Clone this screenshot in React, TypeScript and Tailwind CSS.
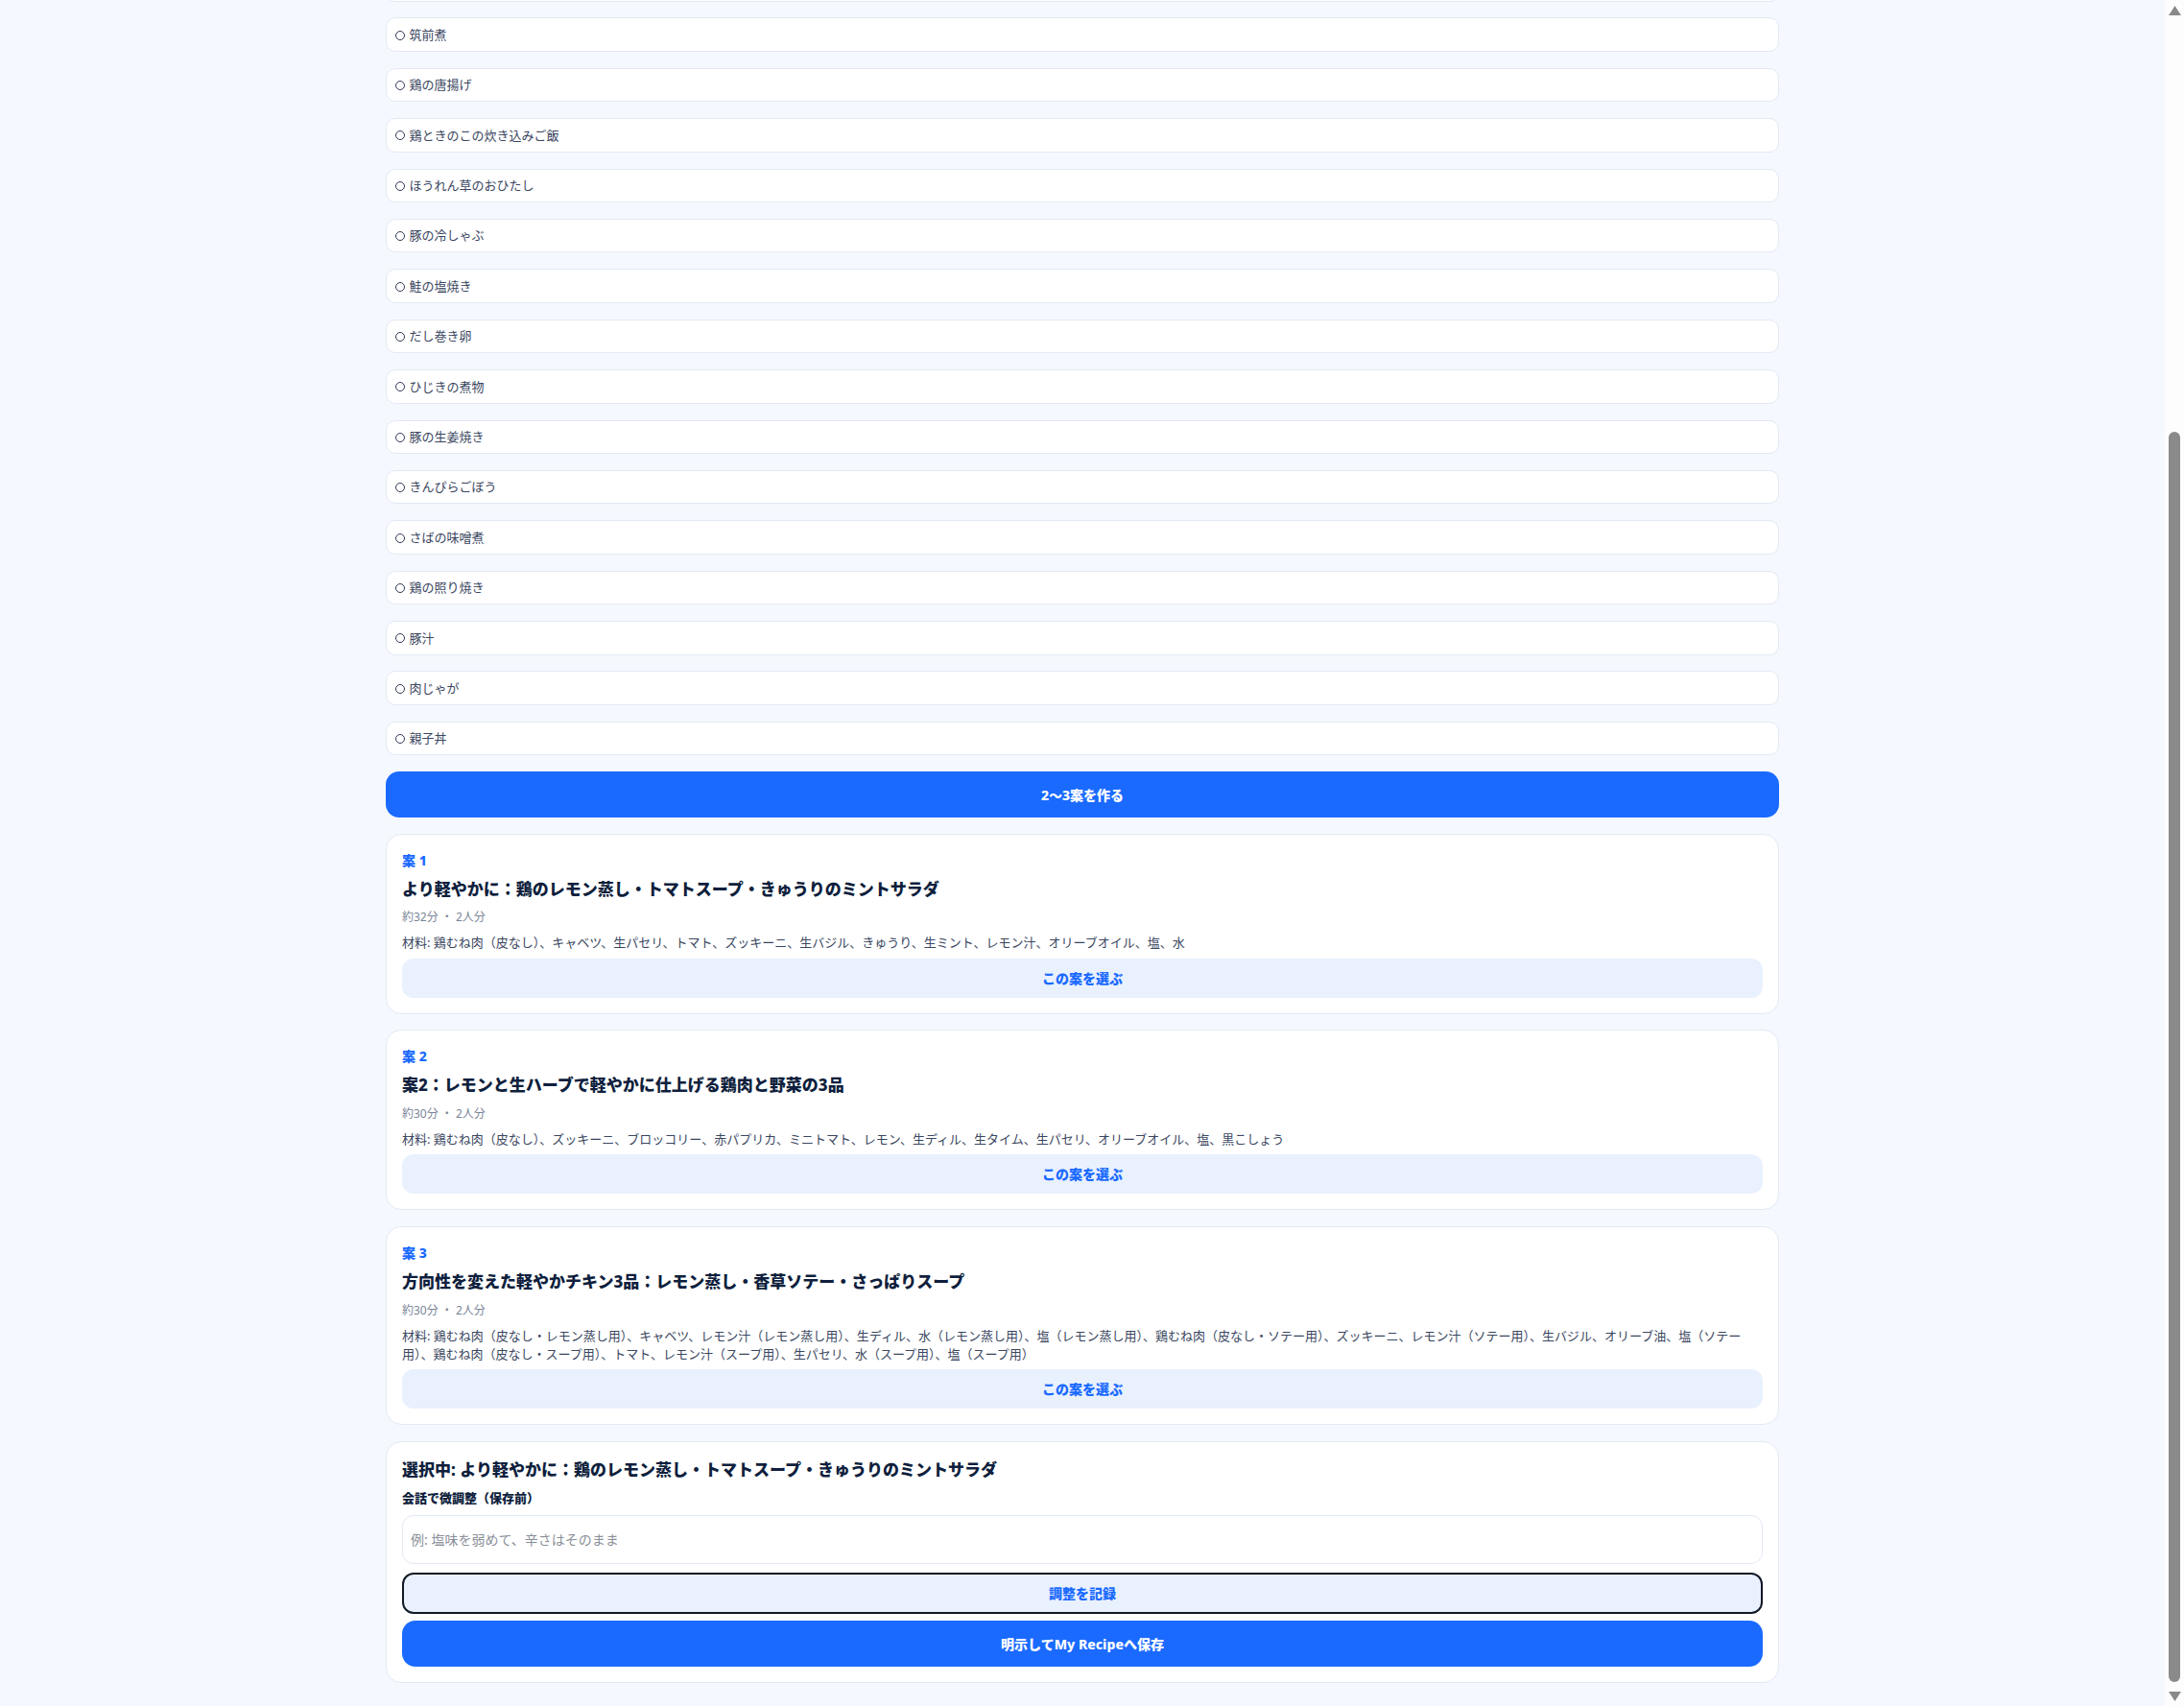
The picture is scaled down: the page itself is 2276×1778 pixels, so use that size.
import React from 'react';

const dishes = ['筑前煮', '鶏の唐揚げ', '鶏ときのこの炊き込みご飯', 'ほうれん草のおひたし', '豚の冷しゃぶ', '鮭の塩焼き', 'だし巻き卵', 'ひじきの煮物', '豚の生姜焼き', 'きんぴらごぼう', 'さばの味噌煮', '鶏の照り焼き', '豚汁', '肉じゃが', '親子丼'];

const plans = [
  {
    label: '案 1',
    title: 'より軽やかに：鶏のレモン蒸し・トマトスープ・きゅうりのミントサラダ',
    meta: '約32分 ・ 2人分',
    materials: '材料: 鶏むね肉（皮なし）、キャベツ、生パセリ、トマト、ズッキーニ、生バジル、きゅうり、生ミント、レモン汁、オリーブオイル、塩、水',
  },
  {
    label: '案 2',
    title: '案2：レモンと生ハーブで軽やかに仕上げる鶏肉と野菜の3品',
    meta: '約30分 ・ 2人分',
    materials: '材料: 鶏むね肉（皮なし）、ズッキーニ、ブロッコリー、赤パプリカ、ミニトマト、レモン、生ディル、生タイム、生パセリ、オリーブオイル、塩、黒こしょう',
  },
  {
    label: '案 3',
    title: '方向性を変えた軽やかチキン3品：レモン蒸し・香草ソテー・さっぱりスープ',
    meta: '約30分 ・ 2人分',
    materials: '材料: 鶏むね肉（皮なし・レモン蒸し用）、キャベツ、レモン汁（レモン蒸し用）、生ディル、水（レモン蒸し用）、塩（レモン蒸し用）、鶏むね肉（皮なし・ソテー用）、ズッキーニ、レモン汁（ソテー用）、生バジル、オリーブ油、塩（ソテー用）、鶏むね肉（皮なし・スープ用）、トマト、レモン汁（スープ用）、生パセリ、水（スープ用）、塩（スープ用）',
  },
];

const DishRow: React.FC<{ name: string }> = ({ name }) => (
  <div className="flex h-[35.5px] items-center rounded-[10px] border border-[#e3e9f4] bg-white pt-px pl-[9px] text-[13px] text-[#3a4660]">
    {name && <span className="mr-[4.5px] h-[10px] w-[10px] rounded-full border border-[#2f3a52]" />}
    {name}
  </div>
);

const App: React.FC = () => {
  return (
    <div className="flex h-[1778px] overflow-hidden bg-[#f5f9ff] font-['Noto_Sans','Noto_Sans_CJK_JP',sans-serif]">
      <main className="flex-1">
        <div className="mx-auto -mt-[34px] flex w-[1452px] flex-col gap-[16.9px]">
          <DishRow name="" />
          {dishes.map(d => (
            <DishRow key={d} name={d} />
          ))}

          <button className="-mb-[0.6px] h-[48px] rounded-[14px] bg-[#1a6aff] text-[14px] font-extrabold text-white">2〜3案を作る</button>

          {plans.map(p => (
            <section key={p.label} className="flex flex-col rounded-[16px] border border-[#e3e9f4] bg-white p-4">
              <div className="text-[14px] leading-[21px] font-extrabold text-[#1a6aff]">{p.label}</div>
              <h3 className="mt-[7px] text-[17px] leading-[25px] font-extrabold text-[#0f1f3d]">{p.title}</h3>
              <div className="mt-[8.5px] text-[12px] leading-[18px] text-[#7a8598]">{p.meta}</div>
              <p className="mt-2 text-[13px] leading-[19px] text-[#3a4660]">{p.materials}</p>
              <button className="mt-[6.5px] h-[41px] rounded-[12px] bg-[#e9f1fe] text-[14px] font-extrabold text-[#1a6aff]">この案を選ぶ</button>
            </section>
          ))}

          <section className="flex flex-col rounded-[16px] border border-[#e3e9f4] bg-white p-4">
            <h3 className="text-[17px] leading-[25px] font-extrabold text-[#0f1f3d]">選択中: より軽やかに：鶏のレモン蒸し・トマトスープ・きゅうりのミントサラダ</h3>
            <label className="mt-2 text-[13px] leading-[19.5px] font-extrabold text-[#0f1f3d]">会話で微調整（保存前）</label>
            <input
              className="mt-[7px] h-[51px] rounded-[12px] border border-[#e3e9f4] bg-white px-2 text-[14px] text-[#3a4660] outline-none placeholder:text-[#8a8f99]"
              placeholder="例: 塩味を弱めて、辛さはそのまま"
            />
            <button className="mt-[9px] h-[43px] rounded-[12px] border-2 border-[#111827] bg-[#e9f1fe] text-[14px] font-extrabold text-[#1a6aff]">調整を記録</button>
            <button className="mt-[7.5px] h-[48px] rounded-[14px] bg-[#1a6aff] text-[14px] font-extrabold text-white">明示してMy Recipeへ保存</button>
          </section>
        </div>
      </main>

      {/* scrollbar */}
      <aside className="flex w-[20px] flex-col items-center bg-[#fdfdfd]">
        <svg width="13" height="10" viewBox="0 0 13 10" className="mt-[6px] shrink-0 fill-[#8a8a8a]">
          <path d="M6.5 0 13 10H0z" />
        </svg>
        <div className="mt-[434px] h-[1303px] w-[12px] shrink-0 rounded-[6px] bg-[#8a8a8a]" />
        <svg width="13" height="10" viewBox="0 0 13 10" className="mt-[10px] shrink-0 fill-[#8a8a8a]">
          <path d="M0 0H13L6.5 10z" />
        </svg>
      </aside>
    </div>
  );
};

export default App;
